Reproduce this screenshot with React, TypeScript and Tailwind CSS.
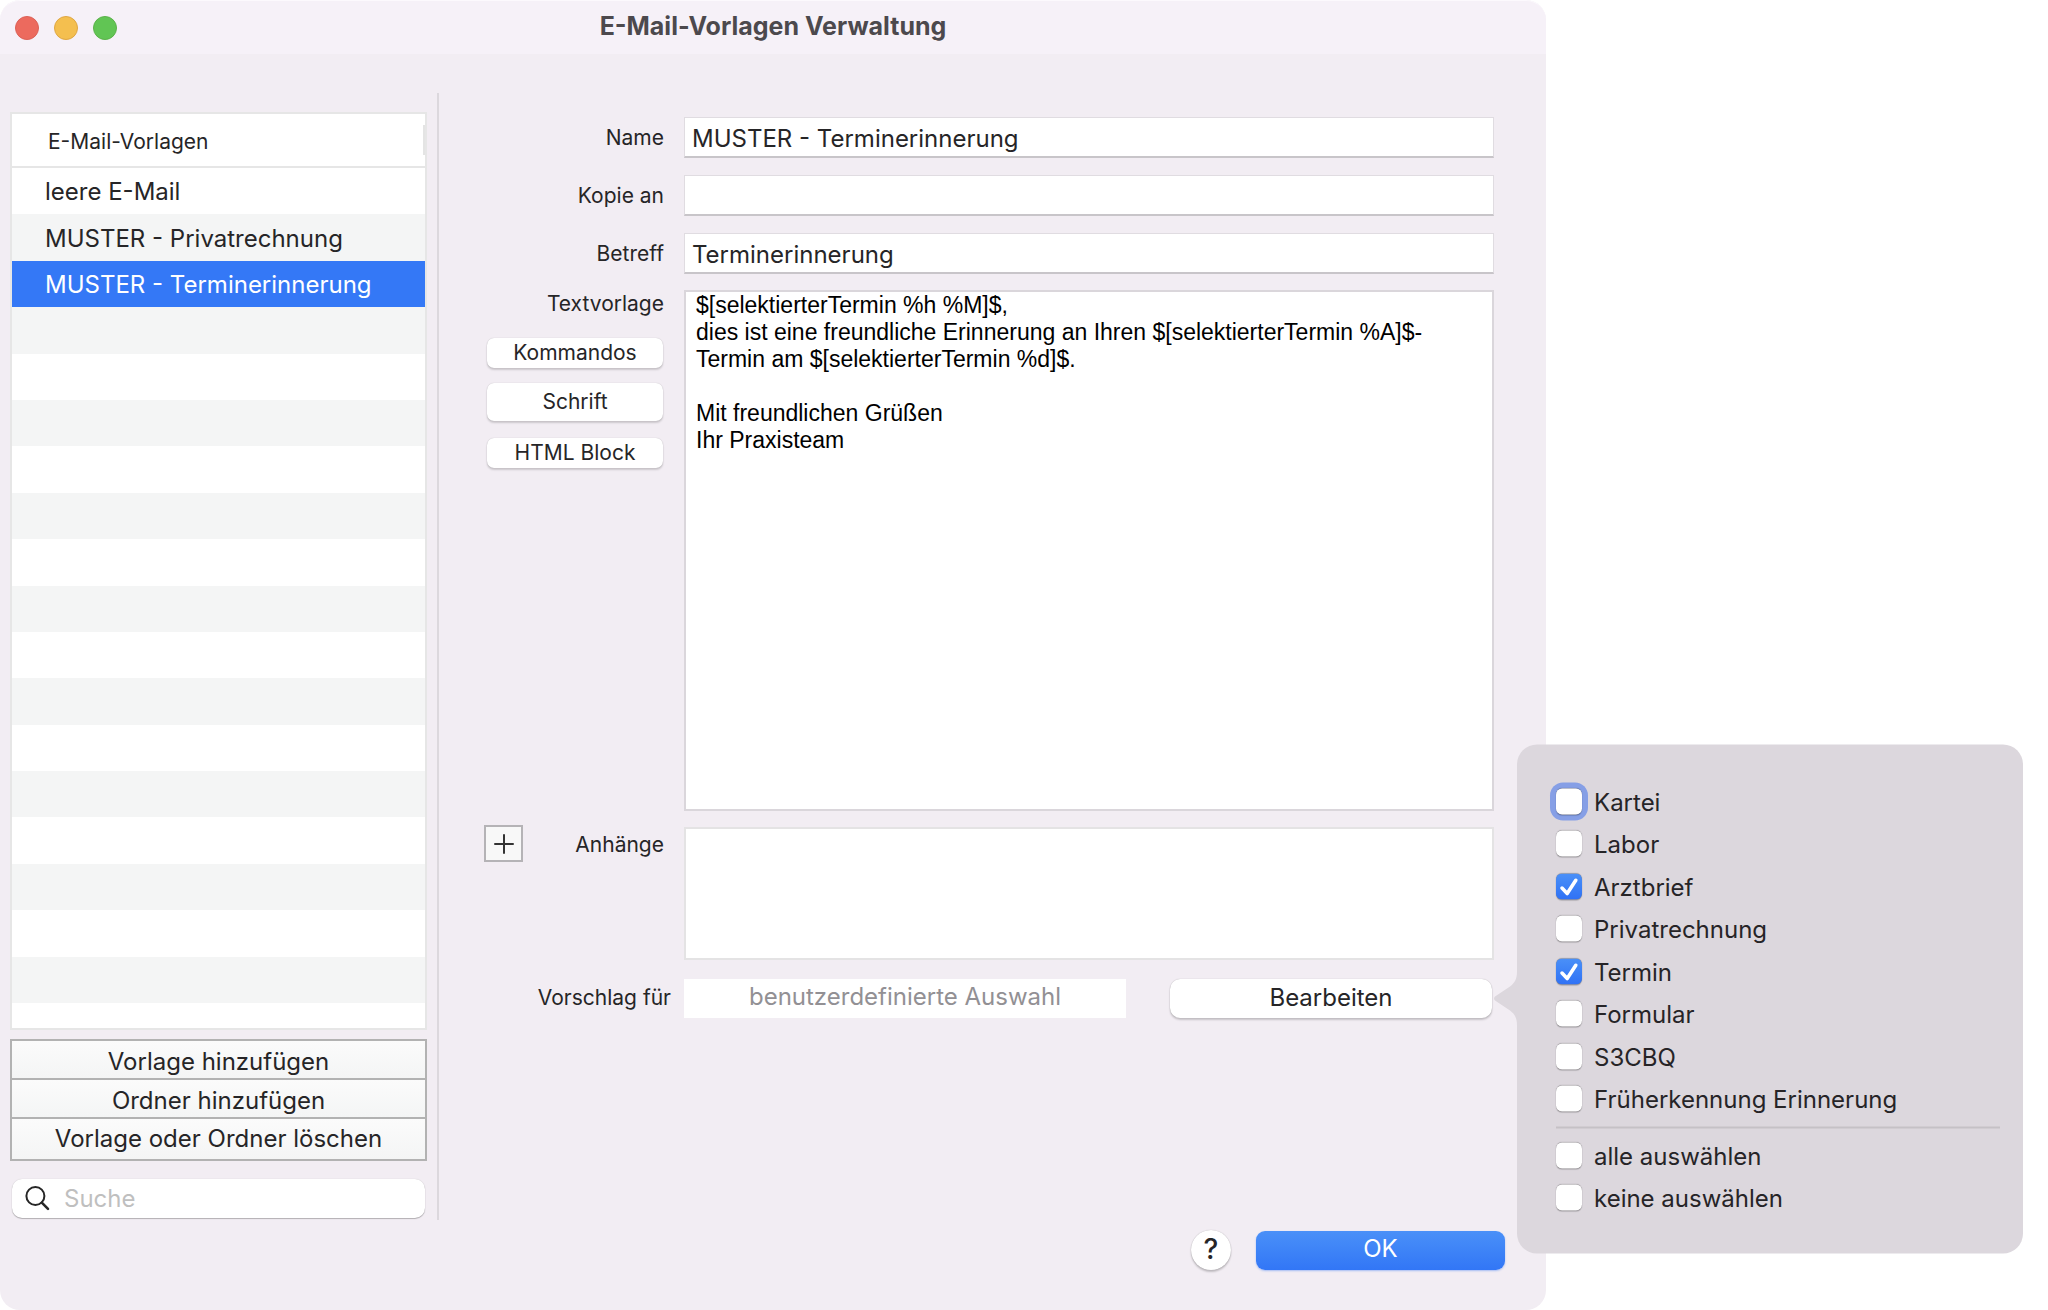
import { useState } from "react";

const templates = ["leere E-Mail", "MUSTER - Privatrechnung", "MUSTER - Terminerinnerung"];
const emptyRows = Array.from({ length: 16 }, (_, i) => i);
const areas = ["Kartei", "Labor", "Arztbrief", "Privatrechnung", "Termin", "Formular", "S3CBQ", "Früherkennung Erinnerung"];
const bulkOptions = ["alle auswählen", "keine auswählen"];
const initialBody =
  "$[selektierterTermin %h %M]$,\ndies ist eine freundliche Erinnerung an Ihren $[selektierterTermin %A]$-\nTermin am $[selektierterTermin %d]$.\n\nMit freundlichen Grüßen\nIhr Praxisteam";

const fieldLabel = "w-[180px] shrink-0 text-right text-[21px] leading-7";
const smallButton =
  "mr-px w-44 rounded-[7px] bg-white text-[21px] leading-6 shadow-[0_0_1px_rgba(0,0,0,0.25),0_2px_2px_rgba(0,0,0,0.16)]";

function TitleBar() {
  return (
    <header className="grid h-[54px] grid-cols-[1fr_auto_1fr] items-center border-t border-[#fcf9fd] bg-[#f6f1f8]">
      <div className="flex gap-[15px] pl-[15px]">
        <button aria-label="Schließen" className="size-6 rounded-full border border-[#dc6157] bg-[#ec6a5e]" />
        <button aria-label="Minimieren" className="size-6 rounded-full border border-[#dfa744] bg-[#f4bf4f]" />
        <button aria-label="Maximieren" className="size-6 rounded-full border border-[#5bb24a] bg-[#61c554]" />
      </div>
      <h1 className="pb-1 text-[25px] leading-8 font-bold text-[#4c494d]">E-Mail-Vorlagen Verwaltung</h1>
    </header>
  );
}

function Sidebar() {
  const [selected, setSelected] = useState(2);
  const listButton = "bg-linear-to-b from-[#fbfbfb] to-[#f4f5f5] text-center leading-8";
  return (
    <aside className="flex w-[417px] shrink-0 flex-col pt-[19px] pb-0.5 text-2xl">
      <section className="flex flex-1 flex-col border-2 border-[#e6e6e6] bg-white">
        <div className="flex h-[54px] items-center justify-between border-b-2 border-[#e6e6e6]">
          <h2 className="pt-1 pl-9 text-[21px]">E-Mail-Vorlagen</h2>
          <span className="h-[30px] w-0.5 bg-[#e4e4e4]" />
        </div>
        <ul className="grid flex-1 grid-rows-[repeat(18,1fr)_25px]">
          {templates.map((name, i) => (
            <li key={name} className="flex even:bg-[#f4f5f5]">
              <button
                aria-pressed={selected === i}
                onClick={() => setSelected(i)}
                className="flex-1 pt-0.5 pl-[33px] text-left leading-8 aria-pressed:bg-[#3478f6] aria-pressed:text-white"
              >
                {name}
              </button>
            </li>
          ))}
          {emptyRows.map((i) => (
            <li key={i} className="even:bg-[#f4f5f5]" />
          ))}
        </ul>
      </section>
      <div className="mt-[9px] grid h-[122px] grid-rows-[37px_37px_1fr] gap-0.5 border-2 border-[#b2b2b2] bg-[#b2b2b2]">
        <button className={`${listButton} pt-[5px]`}>Vorlage hinzufügen</button>
        <button className={`${listButton} pt-[5px]`}>Ordner hinzufügen</button>
        <button className={listButton}>Vorlage oder Ordner löschen</button>
      </div>
      <label className="mx-0.5 mt-[18px] flex h-[39px] items-center rounded-[10px] bg-white pl-[13px] shadow-[0_0_1px_rgba(0,0,0,0.2),0_1px_1px_rgba(0,0,0,0.25)]">
        <svg viewBox="0 0 25 25" className="size-[25px] shrink-0" fill="none" stroke="#262626" strokeLinecap="round">
          <circle cx="10.4" cy="10" r="9" strokeWidth="2" />
          <path d="M16.8 16.6 23 22.8" strokeWidth="2.6" />
        </svg>
        <input
          type="search"
          aria-label="Suche"
          placeholder="Suche"
          className="ml-3.5 min-w-0 flex-1 bg-transparent outline-none placeholder:text-[#bfbfbf]"
        />
      </label>
    </aside>
  );
}

function Field({ id, label, value }: { id: string; label: string; value: string }) {
  return (
    <div className="flex items-center gap-5">
      <label htmlFor={id} className={fieldLabel}>
        {label}
      </label>
      <input
        id={id}
        defaultValue={value}
        className="h-[41px] min-w-0 flex-1 border border-b-2 border-[#e0dce1] border-b-[#c8c5c9] bg-white px-[7px] pt-0.5 text-2xl outline-none"
      />
    </div>
  );
}

function CheckRow({ label, checked = false, focused = false }: { label: string; checked?: boolean; focused?: boolean }) {
  return (
    <label className="flex items-center gap-3">
      <span className={focused ? "grid rounded-[7px] ring-[6px] ring-[#869fe6]" : "grid"}>
        <input
          type="checkbox"
          defaultChecked={checked}
          className="peer col-start-1 row-start-1 size-[26px] appearance-none rounded-md bg-white shadow-[0_0_1px_rgba(0,0,0,0.35),0_1px_1px_rgba(0,0,0,0.12)] checked:bg-linear-to-b checked:from-[#4a90f8] checked:to-[#3071f5] focus:outline-none"
        />
        <svg
          viewBox="0 0 26 26"
          className="pointer-events-none invisible col-start-1 row-start-1 size-[26px] peer-checked:visible"
          fill="none"
          stroke="white"
          strokeWidth="3.6"
          strokeLinecap="round"
          strokeLinejoin="round"
        >
          <path d="M6 14.6 11.2 20 19.8 6.8" />
        </svg>
      </span>
      <span className="pt-0.5 leading-8">{label}</span>
    </label>
  );
}

function Popover() {
  return (
    <div
      role="dialog"
      aria-label="Vorschlag für"
      className="absolute top-1/2 left-full z-10 ml-[25px] w-[506px] -translate-y-1/2 rounded-[20px] bg-[#dcd7dd] pt-9 pr-[23px] pb-[34px] pl-[39px] text-left text-2xl text-[#262427]"
    >
      <svg viewBox="0 0 24 54" className="absolute top-1/2 right-full h-[54px] w-6 -translate-y-1/2" fill="#dcd7dd">
        <path d="M24 0C24 8 21.500 11.500 17 15L2 25Q0 27 2 29L17 39C21.500 42.500 24 46 24 54Z" />
      </svg>
      <div className="grid h-[340px] grid-rows-8">
        {areas.map((name) => (
          <CheckRow key={name} label={name} checked={name === "Arztbrief" || name === "Termin"} focused={name === "Kartei"} />
        ))}
      </div>
      <hr className="mt-1.5 mb-1.5 border-t-2 border-[#c5c1c6]" />
      <div className="grid h-[85px] grid-rows-2">
        {bulkOptions.map((name) => (
          <CheckRow key={name} label={name} />
        ))}
      </div>
    </div>
  );
}

function TemplateForm() {
  return (
    <form className="flex flex-1 flex-col gap-4 pt-6 pr-[52px] pb-[202px] pl-[45px]" onSubmit={(e) => e.preventDefault()}>
      <div className="flex flex-col gap-[17px]">
        <Field id="name" label="Name" value="MUSTER - Terminerinnerung" />
        <Field id="copy" label="Kopie an" value="" />
        <Field id="subject" label="Betreff" value="Terminerinnerung" />
      </div>
      <div className="flex flex-1 gap-5">
        <div className="flex w-[180px] shrink-0 flex-col items-end">
          <label htmlFor="body" className={fieldLabel}>
            Textvorlage
          </label>
          <button type="button" className={`${smallButton} mt-5 h-[30px]`}>
            Kommandos
          </button>
          <button type="button" className={`${smallButton} mt-[15px] h-[38px]`}>
            Schrift
          </button>
          <button type="button" className={`${smallButton} mt-[17px] h-[30px]`}>
            HTML Block
          </button>
        </div>
        <textarea
          id="body"
          defaultValue={initialBody}
          spellCheck={false}
          className="min-w-0 flex-1 resize-none border-2 border-[#dad6db] bg-white px-2.5 py-0 font-['Liberation_Sans',sans-serif] text-[23px] leading-[27px] text-black outline-none"
        />
      </div>
      <div className="flex gap-5">
        <div className="flex w-[180px] shrink-0 items-start justify-between">
          <button
            type="button"
            aria-label="Anhang hinzufügen"
            className="-mt-0.5 flex h-[37px] w-[39px] items-center justify-center border-2 border-[#b5b3b6] bg-[#f8f8f8]"
          >
            <svg viewBox="0 0 20 20" className="size-5" stroke="#333" strokeWidth="2" strokeLinecap="round">
              <path d="M10 1v18M1 10h18" />
            </svg>
          </button>
          <span className="pt-1 text-right text-[21px] leading-7">Anhänge</span>
        </div>
        <div className="h-[133px] flex-1 border-2 border-[#e4e3e4] bg-white" />
      </div>
      <div className="mt-[3px] flex items-center">
        <label htmlFor="suggestion" className="w-[187px] shrink-0 pb-0.5 text-right text-[21px] leading-7">
          Vorschlag für
        </label>
        <input
          id="suggestion"
          readOnly
          value="benutzerdefinierte Auswahl"
          className="ml-[13px] h-[39px] min-w-0 flex-1 bg-white pb-1 text-center text-2xl text-[#929094] outline-none"
        />
        <div className="relative mr-0.5 ml-11">
          <button
            type="button"
            className="h-[39px] w-[322px] rounded-[10px] bg-white pb-0.5 text-2xl leading-8 shadow-[0_0_1px_rgba(0,0,0,0.3),0_2px_2px_rgba(0,0,0,0.18)]"
          >
            Bearbeiten
          </button>
          <Popover />
        </div>
      </div>
    </form>
  );
}

export default function App() {
  return (
    <main className="min-h-screen bg-white pr-[502px] font-[Inter,sans-serif] text-[#262527]">
      <div className="flex min-h-screen flex-col rounded-[20px] bg-[#f2edf3] *:first:rounded-t-[20px]">
        <TitleBar />
        <div className="mt-[39px] flex flex-1 pl-2.5">
          <Sidebar />
          <div className="ml-2.5 w-0.5 bg-[#dcd8dd]" />
          <TemplateForm />
        </div>
        <footer className="mt-2.5 mr-[41px] mb-10 flex items-center justify-end gap-[25px]">
          <button
            aria-label="Hilfe"
            className="size-10 rounded-full bg-white pb-0.5 text-[28px] leading-8 font-medium shadow-[0_0_1px_rgba(0,0,0,0.3),0_2px_2px_rgba(0,0,0,0.2)]"
          >
            ?
          </button>
          <button className="h-[39px] w-[249px] rounded-[9px] bg-linear-to-b from-[#4a90f8] to-[#3276f6] pb-0.5 text-2xl leading-8 text-white shadow-[0_1px_2px_rgba(50,118,246,0.4)]">
            OK
          </button>
        </footer>
      </div>
    </main>
  );
}
